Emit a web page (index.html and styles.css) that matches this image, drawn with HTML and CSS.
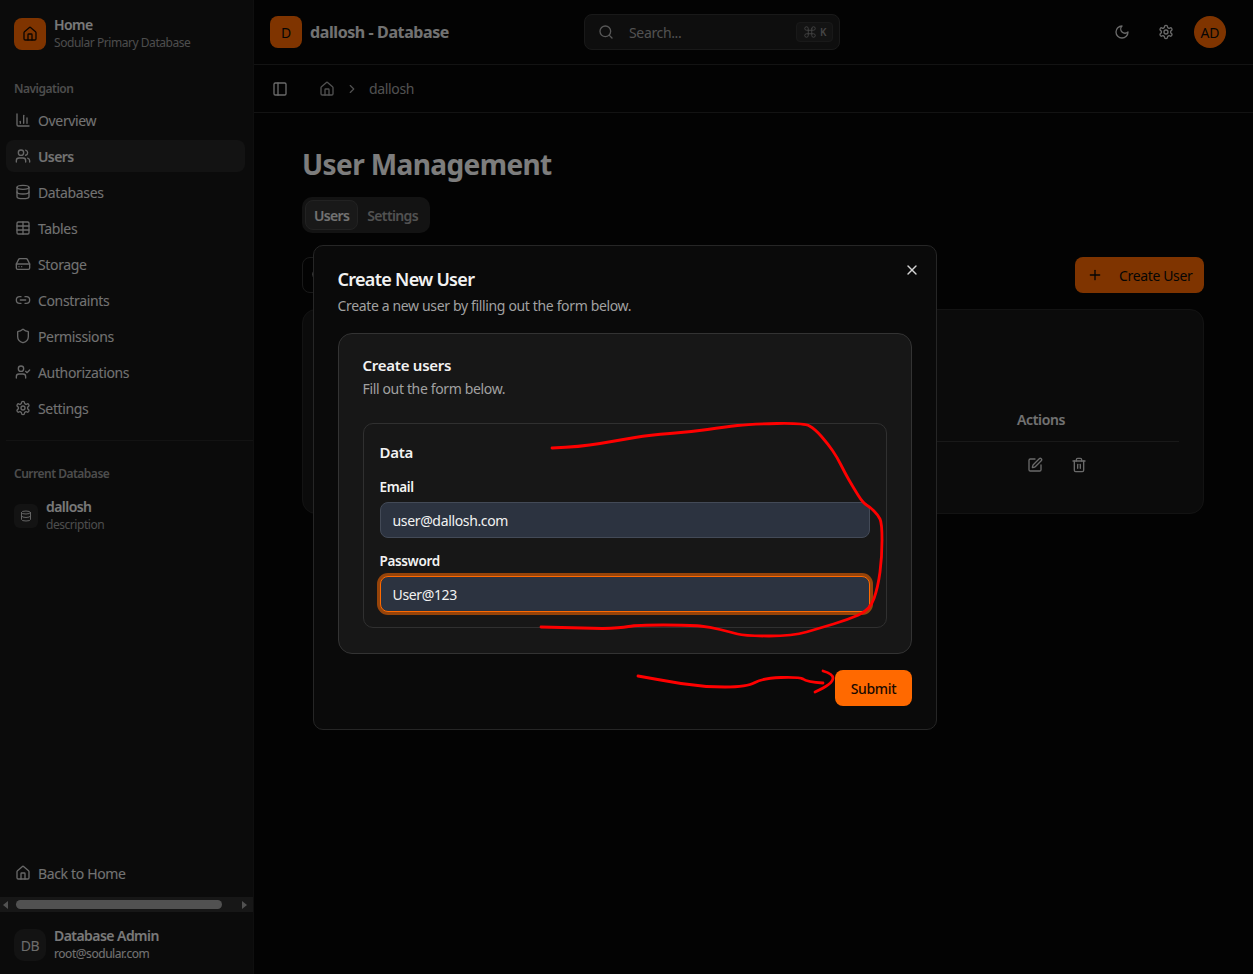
FILE: index.html
```html
<!DOCTYPE html>
<html lang="en">
<head>
  <meta charset="UTF-8">
  <meta name="viewport" content="width=device-width, initial-scale=1.0">
  <title>User Management</title>
  <link rel="stylesheet" href="styles.css">
</head>
<body>
  <svg class="sprite" xmlns="http://www.w3.org/2000/svg">
    <symbol id="i-home" viewBox="0 0 24 24"><path d="M15 21v-8a1 1 0 0 0-1-1h-4a1 1 0 0 0-1 1v8"/><path d="M3 10a2 2 0 0 1 .709-1.528l7-5.999a2 2 0 0 1 2.582 0l7 5.999A2 2 0 0 1 21 10v9a2 2 0 0 1-2 2H5a2 2 0 0 1-2-2z"/></symbol>
    <symbol id="i-chart" viewBox="0 0 24 24"><path d="M3 3v16a2 2 0 0 0 2 2h16"/><path d="M18 17V9"/><path d="M13 17V5"/><path d="M8 17v-3"/></symbol>
    <symbol id="i-users" viewBox="0 0 24 24"><path d="M16 21v-2a4 4 0 0 0-4-4H6a4 4 0 0 0-4 4v2"/><circle cx="9" cy="7" r="4"/><path d="M22 21v-2a4 4 0 0 0-3-3.87"/><path d="M16 3.13a4 4 0 0 1 0 7.75"/></symbol>
    <symbol id="i-db" viewBox="0 0 24 24"><ellipse cx="12" cy="5" rx="9" ry="3"/><path d="M3 5V19A9 3 0 0 0 21 19V5"/><path d="M3 12A9 3 0 0 0 21 12"/></symbol>
    <symbol id="i-table" viewBox="0 0 24 24"><path d="M12 3v18"/><rect x="3" y="3" width="18" height="18" rx="2"/><path d="M3 9h18"/><path d="M3 15h18"/></symbol>
    <symbol id="i-drive" viewBox="0 0 24 24"><path d="M22 12H2"/><path d="M5.45 5.11 2 12v6a2 2 0 0 0 2 2h16a2 2 0 0 0 2-2v-6l-3.45-6.89A2 2 0 0 0 16.76 4H7.24a2 2 0 0 0-1.79 1.11z"/><path d="M6 16h.01"/><path d="M10 16h.01"/></symbol>
    <symbol id="i-link" viewBox="0 0 24 24"><path d="M9 17H7A5 5 0 0 1 7 7h2"/><path d="M15 7h2a5 5 0 1 1 0 10h-2"/><path d="M8 12h8"/></symbol>
    <symbol id="i-shield" viewBox="0 0 24 24"><path d="M20 13c0 5-3.5 7.5-7.66 8.95a1 1 0 0 1-.67-.01C7.5 20.5 4 18 4 13V6a1 1 0 0 1 1-1c2 0 4.5-1.2 6.24-2.72a1.17 1.17 0 0 1 1.52 0C14.51 3.81 17 5 19 5a1 1 0 0 1 1 1z"/></symbol>
    <symbol id="i-usercheck" viewBox="0 0 24 24"><path d="M16 21v-2a4 4 0 0 0-4-4H6a4 4 0 0 0-4 4v2"/><circle cx="9" cy="7" r="4"/><path d="m16 11 2 2 4-4"/></symbol>
    <symbol id="i-gear" viewBox="0 0 24 24"><path d="M12.22 2h-.44a2 2 0 0 0-2 2v.18a2 2 0 0 1-1 1.73l-.43.25a2 2 0 0 1-2 0l-.15-.08a2 2 0 0 0-2.73.73l-.22.38a2 2 0 0 0 .73 2.73l.15.1a2 2 0 0 1 1 1.72v.51a2 2 0 0 1-1 1.74l-.15.09a2 2 0 0 0-.73 2.73l.22.38a2 2 0 0 0 2.73.73l.15-.08a2 2 0 0 1 2 0l.43.25a2 2 0 0 1 1 1.73V20a2 2 0 0 0 2 2h.44a2 2 0 0 0 2-2v-.18a2 2 0 0 1 1-1.73l.43-.25a2 2 0 0 1 2 0l.15.08a2 2 0 0 0 2.73-.73l.22-.39a2 2 0 0 0-.73-2.73l-.15-.08a2 2 0 0 1-1-1.74v-.5a2 2 0 0 1 1-1.74l.15-.09a2 2 0 0 0 .73-2.73l-.22-.38a2 2 0 0 0-2.73-.73l-.15.08a2 2 0 0 1-2 0l-.43-.25a2 2 0 0 1-1-1.73V4a2 2 0 0 0-2-2z"/><circle cx="12" cy="12" r="3"/></symbol>
    <symbol id="i-search" viewBox="0 0 24 24"><circle cx="11" cy="11" r="8"/><path d="m21 21-4.3-4.3"/></symbol>
    <symbol id="i-moon" viewBox="0 0 24 24"><path d="M12 3a6 6 0 0 0 9 9 9 9 0 1 1-9-9Z"/></symbol>
    <symbol id="i-panel" viewBox="0 0 24 24"><rect x="3" y="3" width="18" height="18" rx="2"/><path d="M9 3v18"/></symbol>
    <symbol id="i-chevron" viewBox="0 0 24 24"><path d="m9 18 6-6-6-6"/></symbol>
    <symbol id="i-plus" viewBox="0 0 24 24"><path d="M5 12h14"/><path d="M12 5v14"/></symbol>
    <symbol id="i-x" viewBox="0 0 24 24"><path d="M18 6 6 18"/><path d="m6 6 12 12"/></symbol>
    <symbol id="i-pen" viewBox="0 0 24 24"><path d="M12 3H5a2 2 0 0 0-2 2v14a2 2 0 0 0 2 2h14a2 2 0 0 0 2-2v-7"/><path d="M18.375 2.625a1 1 0 0 1 3 3l-9.013 9.014a2 2 0 0 1-.853.505l-2.873.84a.5.5 0 0 1-.62-.62l.84-2.873a2 2 0 0 1 .506-.852z"/></symbol>
    <symbol id="i-trash" viewBox="0 0 24 24"><path d="M3 6h18"/><path d="M19 6v14c0 1-1 2-2 2H7c-1 0-2-1-2-2V6"/><path d="M8 6V4c0-1 1-2 2-2h4c1 0 2 1 2 2v2"/><path d="M10 11v6"/><path d="M14 11v6"/></symbol>
    <symbol id="i-cmd" viewBox="0 0 24 24"><path d="M15 6v12a3 3 0 1 0 3-3H6a3 3 0 1 0 3 3V6a3 3 0 1 0-3 3h12a3 3 0 1 0-3-3"/></symbol>
  </svg>

  <div class="app">
    <aside class="sidebar">
      <div class="brand">
        <span class="brand-icon"><svg class="icon"><use href="#i-home"/></svg></span>
        <div class="stack">
          <strong class="name">Home</strong>
          <span class="sub">Sodular Primary Database</span>
        </div>
      </div>

      <div class="group-label nav-label">Navigation</div>
      <nav class="nav">
        <a class="nav-item"><svg class="icon"><use href="#i-chart"/></svg>Overview</a>
        <a class="nav-item active"><svg class="icon"><use href="#i-users"/></svg>Users</a>
        <a class="nav-item"><svg class="icon"><use href="#i-db"/></svg>Databases</a>
        <a class="nav-item"><svg class="icon"><use href="#i-table"/></svg>Tables</a>
        <a class="nav-item"><svg class="icon"><use href="#i-drive"/></svg>Storage</a>
        <a class="nav-item"><svg class="icon"><use href="#i-link"/></svg>Constraints</a>
        <a class="nav-item"><svg class="icon"><use href="#i-shield"/></svg>Permissions</a>
        <a class="nav-item"><svg class="icon"><use href="#i-usercheck"/></svg>Authorizations</a>
        <a class="nav-item"><svg class="icon"><use href="#i-gear"/></svg>Settings</a>
      </nav>

      <div class="side-divider"></div>

      <div class="group-label">Current Database</div>
      <div class="current-db">
        <span class="db-icon"><svg class="icon"><use href="#i-db"/></svg></span>
        <div class="stack">
          <strong class="name">dallosh</strong>
          <span class="sub">description</span>
        </div>
      </div>

      <div class="side-bottom">
        <a class="nav-item"><svg class="icon"><use href="#i-home"/></svg>Back to Home</a>
        <div class="hscroll">
          <span class="arrow-left"></span>
          <span class="thumb"></span>
          <span class="arrow-right"></span>
        </div>
        <div class="side-user">
          <span class="side-avatar">DB</span>
          <div class="stack">
            <strong class="name">Database Admin</strong>
            <span class="sub light">root@sodular.com</span>
          </div>
        </div>
      </div>
    </aside>

    <div class="main">
      <header class="topbar">
        <div class="top-left">
          <span class="db-badge">D</span>
          <span class="top-title">dallosh - Database</span>
        </div>
        <div class="search">
          <svg class="icon"><use href="#i-search"/></svg>
          <span class="search-text">Search...</span>
          <kbd class="kbd"><svg class="icon"><use href="#i-cmd"/></svg>K</kbd>
        </div>
        <div class="top-right">
          <svg class="icon"><use href="#i-moon"/></svg>
          <svg class="icon"><use href="#i-gear"/></svg>
          <span class="avatar">AD</span>
        </div>
      </header>

      <div class="crumbs">
        <svg class="icon panel"><use href="#i-panel"/></svg>
        <svg class="icon"><use href="#i-home"/></svg>
        <svg class="icon chev"><use href="#i-chevron"/></svg>
        <span>dallosh</span>
      </div>

      <main class="content">
        <h1>User Management</h1>
        <div class="tabs">
          <span class="tab active">Users</span>
          <span class="tab">Settings</span>
        </div>
        <div class="toolbar">
          <div class="filter"><svg class="icon"><use href="#i-search"/></svg></div>
          <button class="create-btn"><svg class="icon"><use href="#i-plus"/></svg>Create User</button>
        </div>
        <section class="table-card">
          <div class="table-head"><span></span><span>Actions</span></div>
          <div class="table-row">
            <span></span>
            <span class="row-actions">
              <svg class="icon"><use href="#i-pen"/></svg>
              <svg class="icon"><use href="#i-trash"/></svg>
            </span>
          </div>
        </section>
      </main>
    </div>
  </div>

  <div class="overlay"></div>

  <div class="dialog">
    <svg class="icon close"><use href="#i-x"/></svg>
    <h2>Create New User</h2>
    <p class="muted">Create a new user by filling out the form below.</p>

    <div class="form-card">
      <h3>Create users</h3>
      <p class="muted">Fill out the form below.</p>

      <div class="fieldset">
        <h4>Data</h4>
        <label class="field">
          <span>Email</span>
          <input class="input" value="user@dallosh.com">
        </label>
        <label class="field">
          <span>Password</span>
          <input class="input focused" value="User@123">
        </label>
      </div>
    </div>

    <div class="dialog-foot">
      <button class="submit">Submit</button>
    </div>
  </div>

  <svg class="scribble" viewBox="0 0 1253 974" xmlns="http://www.w3.org/2000/svg">
    <path d="M552 448 Q580 447 600 443.5 Q620 440 635 437.5 Q650 435 670 433.5 Q690 432 707.5 429.5 Q725 427 737.5 425.5 Q750 424 777 423.5 Q804 423 809.5 426 Q815 429 821.5 436.5 Q828 444 832.5 450.5 Q837 457 841 465 Q845 473 849 480 Q853 487 858 495 Q863 503 866.5 505 Q870 507 874 511 Q878 515 880 519 Q882 523 882 540 Q882 557 880 572 Q878 587 874 598.5 Q870 610 858.5 615 Q847 620 833.5 624 Q820 628 806.5 632 Q793 636 769 636 Q745 636 737.5 634 Q730 632 720 629.5 Q710 627 700 626 Q690 625 663.5 625 Q637 625 628.5 626.5 Q620 628 602.5 628.5 L541 627"/>
    <path d="M638 676 Q660 680 681 683.5 Q703 687 725 687 Q747 687 755 682.5 Q763 678 781 677.5 Q800 677 803 679 Q807 682 823 683"/>
    <path d="M823 671 Q833 674 833 678 Q833 684 815 692"/>
  </svg>
</body>
</html>
```

FILE: styles.css
```css
* {
  box-sizing: border-box;
}
html, body {
  height: 100%;
}
body {
  margin: 0;
  overflow: hidden;
  background: #070707;
  color: #f2f2f2;
  font-family: "Noto Sans", "Open Sans", sans-serif;
  font-size: 14px;
  letter-spacing: -0.35px;
}
.sprite {
  display: none;
}
.icon {
  width: 16px;
  height: 16px;
  flex: none;
  fill: none;
  stroke: currentColor;
  stroke-width: 2;
  stroke-linecap: round;
  stroke-linejoin: round;
}
.app {
  display: flex;
  height: 100%;
}

/* sidebar */
.sidebar {
  width: 254px;
  flex: none;
  display: flex;
  flex-direction: column;
  background: #171717;
  border-right: 1px solid #1f1f1f;
}
.brand {
  display: flex;
  align-items: center;
  gap: 8px;
  padding: 16px 14px 0;
}
.brand-icon {
  width: 32px;
  height: 32px;
  display: flex;
  align-items: center;
  justify-content: center;
  border-radius: 8px;
  background: #ff6900;
  color: #1a0a00;
}
.stack {
  display: flex;
  flex-direction: column;
}
.name {
  font-weight: 600;
  line-height: 18px;
  letter-spacing: -0.55px;
}
.sub {
  font-size: 12px;
  line-height: 18px;
  letter-spacing: -0.45px;
  color: #9a9a9a;
}
.sub.light {
  color: #e5e5e5;
}
.group-label {
  padding: 0 14px;
  font-size: 12px;
  font-weight: 600;
  line-height: 16px;
  letter-spacing: -0.5px;
  color: #9a9a9a;
}
.nav-label {
  margin-top: 29px;
  margin-bottom: 7px;
}
.nav {
  display: flex;
  flex-direction: column;
  gap: 4px;
  padding-left: 6px;
  padding-right: 8px;
}
.nav-item {
  display: flex;
  align-items: center;
  gap: 7px;
  height: 32px;
  padding-left: 9px;
  border-radius: 8px;
  color: #e5e5e5;
}
.nav-item .icon {
  color: #d0d0d0;
}
.nav-item.active {
  background: #262626;
  font-weight: 600;
  letter-spacing: -0.6px;
}
.side-divider {
  height: 1px;
  margin: 16px 0 25px 6px;
  background: #262626;
}
.current-db {
  display: flex;
  align-items: center;
  gap: 8px;
  margin-top: 16px;
  padding: 0 14px;
}
.db-icon {
  width: 24px;
  height: 24px;
  display: flex;
  align-items: center;
  justify-content: center;
  border-radius: 6px;
  background: #262626;
  color: #c8c8c8;
}
.db-icon .icon {
  width: 12px;
  height: 12px;
}
.side-bottom {
  margin-top: auto;
}
.side-bottom .nav-item {
  margin-left: 6px;
}
.hscroll {
  display: flex;
  align-items: center;
  height: 15px;
  margin-top: 8px;
  padding: 0 6px 0 3px;
  background: #2e2e2e;
}
.thumb {
  width: 206px;
  height: 9px;
  margin: 0 auto 0 8px;
  border-radius: 5px;
  background: #a3a3a3;
}
.arrow-left {
  border: 4px solid transparent;
  border-left: 0;
  border-right: 5px solid #a3a3a3;
}
.arrow-right {
  border: 4px solid transparent;
  border-right: 0;
  border-left: 5px solid #a3a3a3;
}
.side-user {
  display: flex;
  align-items: center;
  gap: 8px;
  padding: 15px 14px 11px;
}
.side-avatar {
  width: 32px;
  height: 32px;
  display: flex;
  align-items: center;
  justify-content: center;
  border-radius: 10px;
  background: #262626;
  color: #d8d8d8;
}

/* top */
.main {
  flex: 1;
  min-width: 0;
  display: flex;
  flex-direction: column;
}
.topbar {
  height: 65px;
  flex: none;
  display: flex;
  align-items: center;
  padding: 0 27px 0 16px;
  border-bottom: 1px solid #262626;
}
.top-left {
  display: flex;
  align-items: center;
  gap: 8px;
  width: 314px;
}
.db-badge {
  width: 32px;
  height: 32px;
  display: flex;
  align-items: center;
  justify-content: center;
  border-radius: 8px;
  background: #ff6900;
  color: #0a0a0a;
}
.top-title {
  font-size: 16px;
  font-weight: 700;
  letter-spacing: -0.4px;
  color: #e5e5e5;
}
.search {
  width: 256px;
  height: 36px;
  display: flex;
  align-items: center;
  padding: 0 6px 0 13px;
  border: 1px solid #333;
  border-radius: 8px;
  background: #1c1c1c;
  color: #b0b0b0;
}
.search-text {
  margin-left: 15px;
  flex: 1;
  color: #a3a3a3;
}
.kbd {
  display: flex;
  align-items: center;
  gap: 3px;
  height: 20px;
  padding: 0 6px;
  border: 1px solid #333;
  border-radius: 4px;
  background: #262626;
  font-family: inherit;
  font-size: 10px;
  font-weight: 600;
  color: #8a8a8a;
}
.kbd .icon {
  width: 14px;
  height: 14px;
  stroke-width: 1.5;
}
.top-right {
  margin-left: auto;
  display: flex;
  align-items: center;
  gap: 28px;
  color: #d4d4d4;
}
.avatar {
  width: 32px;
  height: 32px;
  margin-left: -8px;
  display: flex;
  align-items: center;
  justify-content: center;
  border-radius: 50%;
  background: #ff6900;
  color: #0a0a0a;
  letter-spacing: 0;
}
.crumbs {
  height: 48px;
  flex: none;
  display: flex;
  align-items: center;
  padding-left: 18px;
  border-bottom: 1px solid #262626;
  color: #a3a3a3;
}
.crumbs .panel {
  margin-right: 31px;
  color: #d4d4d4;
}
.crumbs .chev {
  width: 14px;
  height: 14px;
  margin: 0 10px 0 10px;
}

/* page */
.content {
  flex: 1;
  padding: 31px 49px 0 48px;
}
h1 {
  margin: 0;
  font-size: 28px;
  line-height: 40px;
  font-weight: 700;
  letter-spacing: -0.6px;
  color: #fafafa;
}
.tabs {
  display: inline-flex;
  align-items: center;
  height: 36px;
  margin-top: 13px;
  padding: 0 3px;
  border-radius: 10px;
  background: #262626;
  color: #a3a3a3;
  font-weight: 600;
  letter-spacing: -0.65px;
  vertical-align: top;
}
.tab {
  height: 30px;
  display: flex;
  align-items: center;
  padding: 0 8px;
  border: 1px solid transparent;
  border-radius: 8px;
}
.tab.active {
  background: #333;
  border-color: #444;
  color: #e5e5e5;
}
.toolbar {
  display: flex;
  justify-content: space-between;
  margin-top: 24px;
}
.filter {
  width: 400px;
  height: 36px;
  display: flex;
  align-items: center;
  padding-left: 8px;
  border: 1px solid #333;
  border-radius: 8px;
  color: #a3a3a3;
}
.create-btn {
  display: flex;
  align-items: center;
  gap: 16px;
  width: 129px;
  height: 36px;
  padding: 0 0 0 12px;
  border: 0;
  border-radius: 8px;
  background: #ff6900;
  color: #0a0a0a;
  font: inherit;
  letter-spacing: inherit;
}
.table-card {
  height: 205px;
  margin-top: 16px;
  padding: 91px 24px 0;
  border: 1px solid #262626;
  border-radius: 14px;
  background: #171717;
}
.table-head,
.table-row {
  display: grid;
  grid-template-columns: 1fr 162px;
}
.table-head {
  height: 41px;
  padding-bottom: 4px;
  align-items: center;
  border-bottom: 1px solid #333;
  font-weight: 600;
  color: #e5e5e5;
}
.row-actions {
  display: flex;
  gap: 28px;
  padding: 15px 0 0 10px;
  color: #d4d4d4;
}

/* dialog on top */
.overlay {
  position: fixed;
  inset: 0;
  background: rgba(0, 0, 0, 0.5);
}
.dialog {
  position: fixed;
  left: 312.5px;
  top: 245px;
  width: 624.5px;
  height: 485px;
  padding: 23px 24px 24px;
  border: 1px solid #262626;
  border-radius: 10px;
  background: #0a0a0a;
}
.close {
  position: absolute;
  top: 16px;
  right: 16px;
  color: #d4d4d4;
}
h2 {
  margin: 0;
  font-size: 18px;
  line-height: 20px;
  font-weight: 600;
  letter-spacing: -0.7px;
}
.muted {
  margin: 0;
  line-height: 20px;
  color: #a1a1a1;
}
h2 + .muted {
  margin-top: 7px;
}
.form-card {
  margin-top: 17px;
  padding: 22px 24px 0;
  height: 321px;
  border: 1px solid #333;
  border-radius: 14px;
  background: #171717;
}
h3 {
  margin: 0 0 5px;
  font-size: 15px;
  line-height: 18px;
  font-weight: 600;
  letter-spacing: -0.25px;
}
.fieldset {
  margin-top: 24px;
  height: 205px;
  padding: 16px;
  border: 1px solid #303030;
  border-radius: 10px;
}
h4 {
  margin: 0 0 13px;
  font-size: 15px;
  line-height: 24px;
  font-weight: 600;
  letter-spacing: -0.25px;
}
.field {
  display: flex;
  flex-direction: column;
  gap: 5px;
  margin-bottom: 13px;
}
.field span {
  font-weight: 600;
  line-height: 20px;
  font-size: 13.5px;
}
.input {
  width: 100%;
  height: 36px;
  padding: 0 12px;
  border: 1px solid #434a57;
  border-radius: 8px;
  background: #2c3340;
  color: #f2f2f2;
  font: inherit;
  letter-spacing: inherit;
  outline: none;
}
.input.focused {
  border-color: #ff6900;
  box-shadow: 0 0 0 3px rgba(255, 105, 0, 0.55);
}
.dialog-foot {
  display: flex;
  justify-content: flex-end;
  margin-top: 16px;
}
.submit {
  width: 77px;
  height: 36px;
  border: 0;
  border-radius: 8px;
  background: #ff6900;
  color: #1a0a00;
  font: inherit;
  letter-spacing: inherit;
  font-weight: 500;
}
.scribble {
  position: fixed;
  inset: 0;
  width: 1253px;
  height: 974px;
  fill: none;
  stroke: #f00;
  stroke-width: 2.8;
  stroke-linejoin: round;
  stroke-linecap: round;
  pointer-events: none;
}
```
